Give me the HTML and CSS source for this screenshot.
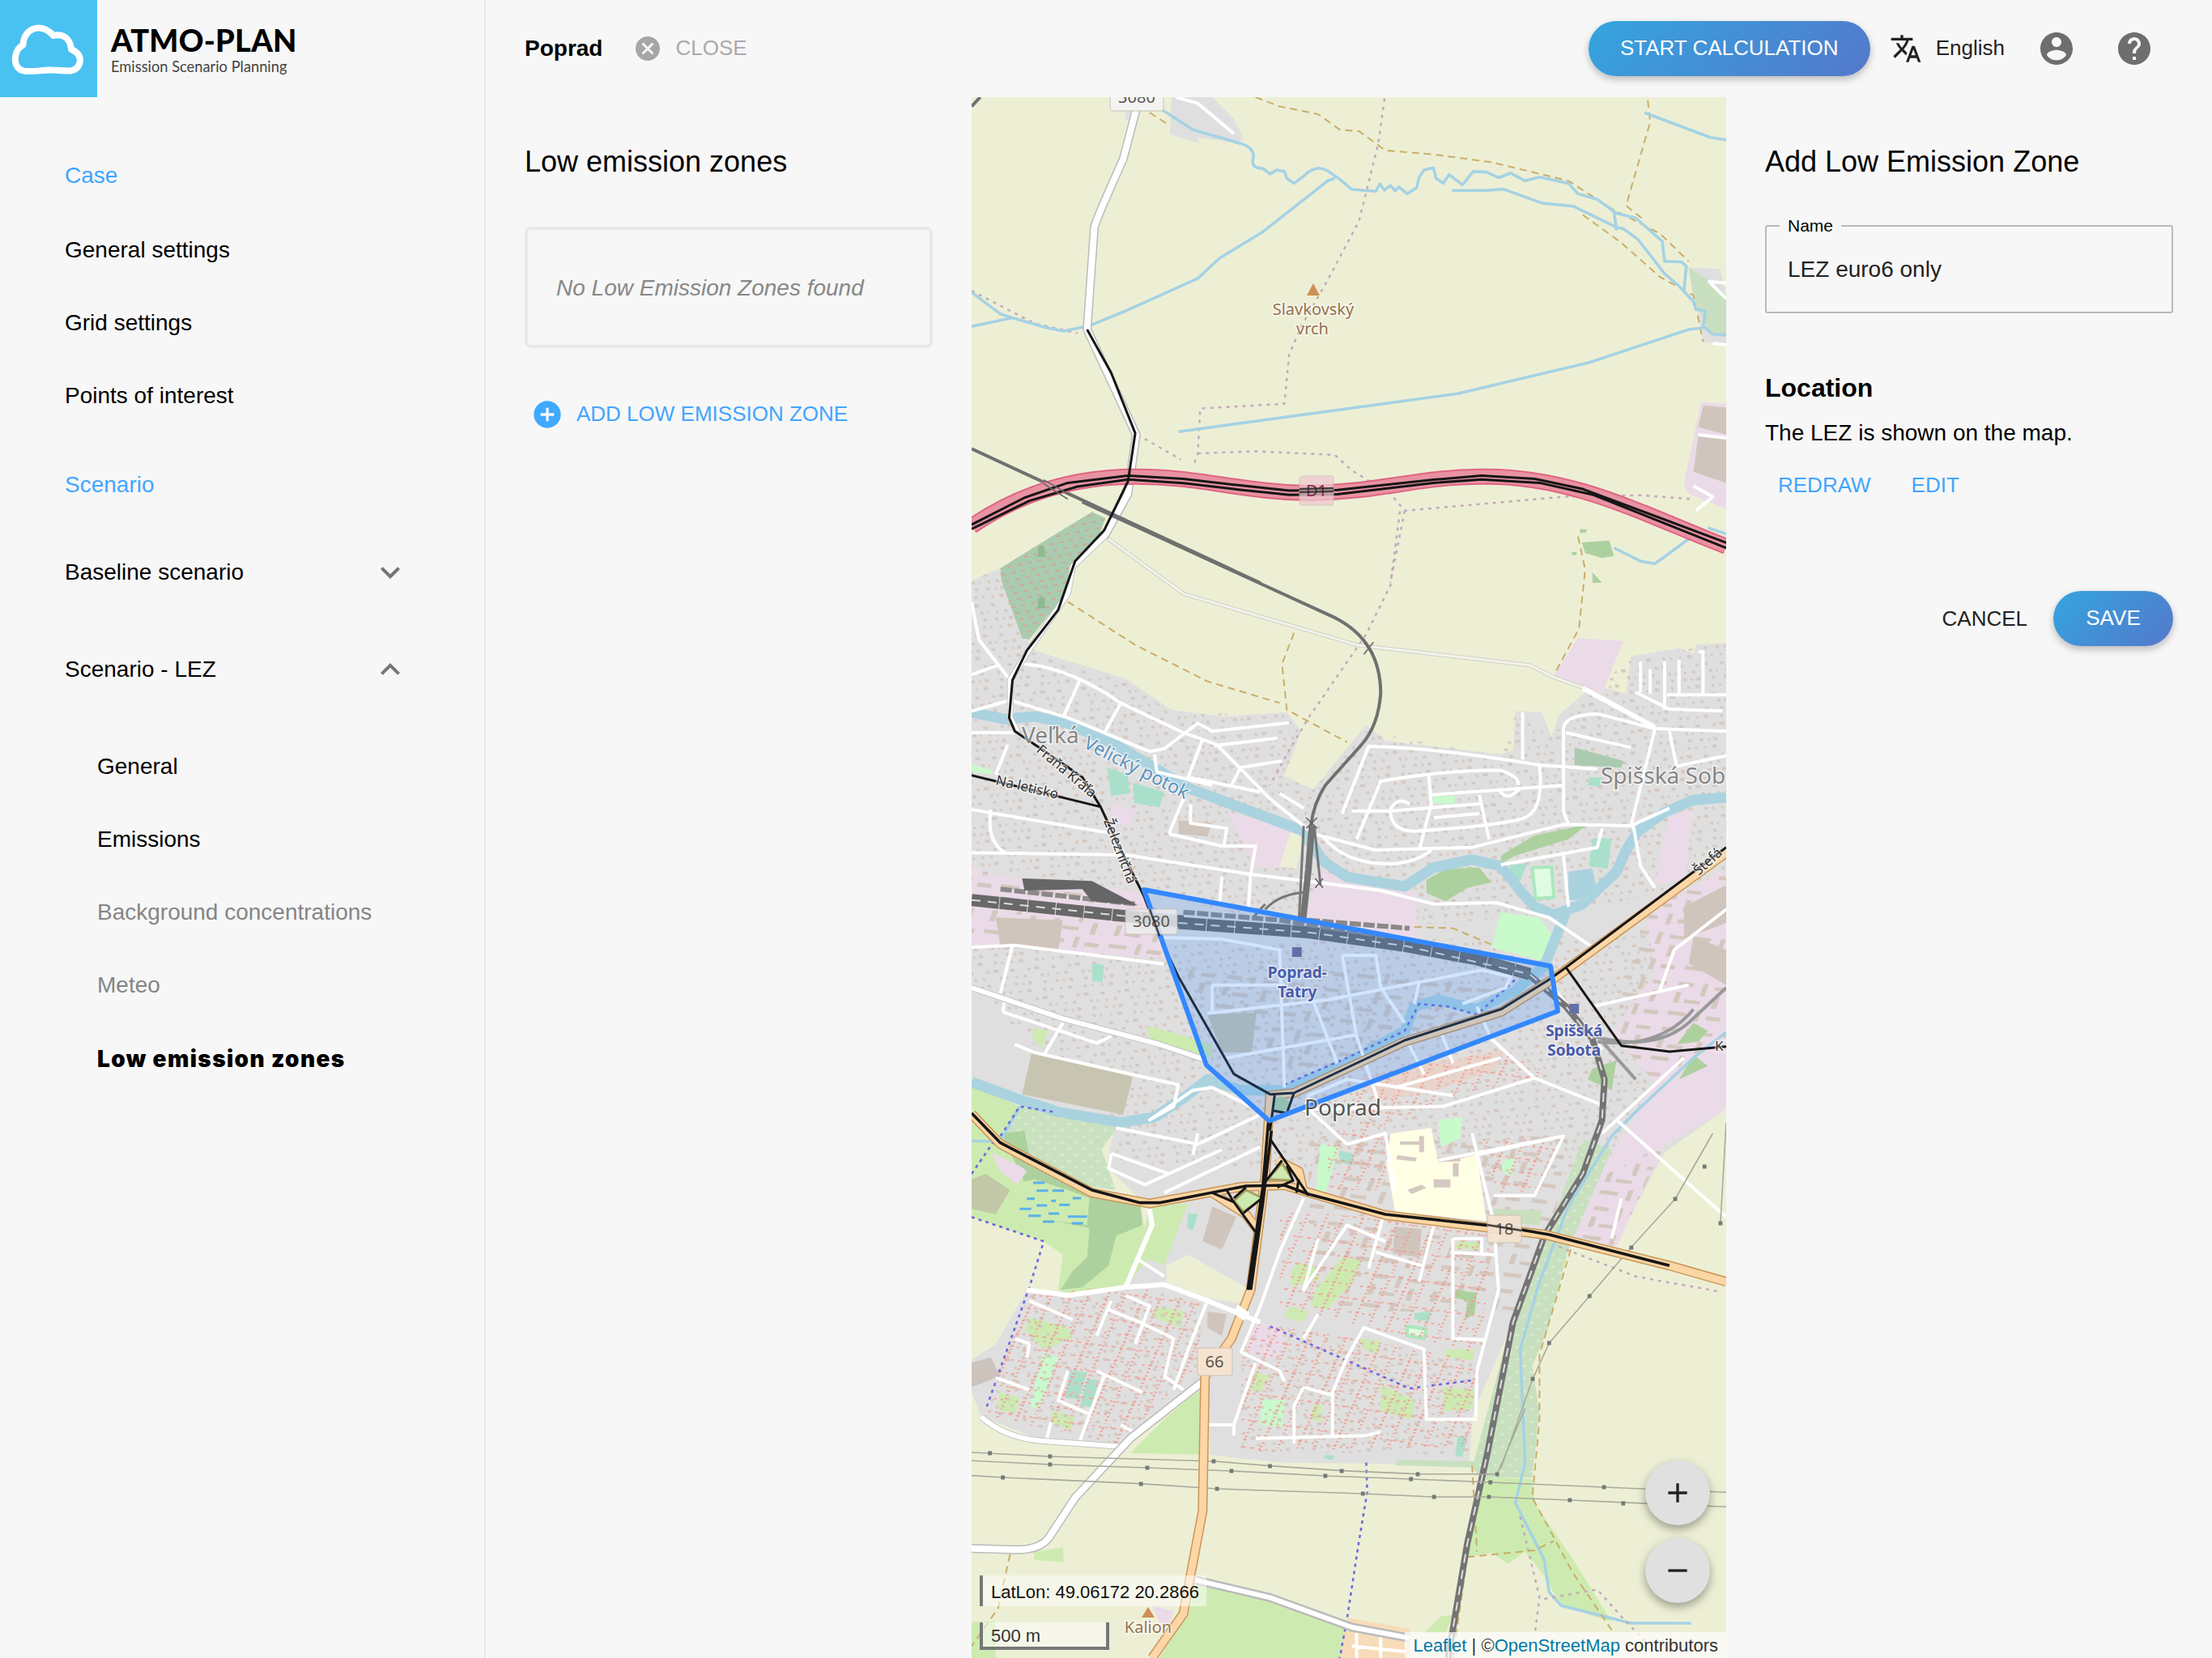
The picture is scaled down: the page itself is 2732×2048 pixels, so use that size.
FILE: index.html
```html
<!DOCTYPE html>
<html lang="en">
<head>
<meta charset="utf-8">
<title>ATMO-PLAN – Low emission zones</title>
<link rel="stylesheet" href="styles.css">
</head>
<body>
<div class="app">
  <aside class="sidebar">
    <div class="brand">
      <svg class="brand-mark" viewBox="0 0 120 120"><path d="M27 87C20 84 18 77 19 70c1-8 5-12 9.500-14.500C29 43 37 34.500 48 34.500c9 0 14 5 18 9.500 11-3 21 3 22 17 7 3 11 8 11 14-1 8-6 12.500-14 12.500-8 0-15-1-23-1-12 0-25 3.500-35 .5z" fill="none" stroke="#fff" stroke-width="8" stroke-linejoin="round"/></svg>
      <div class="brand-text"><div class="brand-name">ATMO-PLAN</div><div class="brand-sub">Emission Scenario Planning</div></div>
    </div>
    <nav class="nav">
      <div class="nav-title first">Case</div>
      <a class="nav-item">General settings</a>
      <a class="nav-item">Grid settings</a>
      <a class="nav-item">Points of interest</a>
      <div class="nav-title">Scenario</div>
      <a class="nav-group">Baseline scenario<svg class="chev" viewBox="0 0 24 24"><path d="M7.41 8.59 12 13.17l4.59-4.58L18 10l-6 6-6-6z"/></svg></a>
      <a class="nav-group">Scenario - LEZ<svg class="chev" viewBox="0 0 24 24"><path d="M7.41 15.41 12 10.83l4.59 4.58L18 14l-6-6-6 6z"/></svg></a>
      <div class="subnav">
        <a class="nav-item">General</a>
        <a class="nav-item">Emissions</a>
        <a class="nav-item disabled">Background concentrations</a>
        <a class="nav-item disabled">Meteo</a>
        <a class="nav-item active">Low emission zones</a>
      </div>
    </nav>
  </aside>
  <div class="main">
    <header class="topbar">
      <div class="case-name">Poprad</div>
      <a class="close"><svg class="ico-close" viewBox="0 0 24 24"><path d="M12 2C6.47 2 2 6.47 2 12s4.47 10 10 10 10-4.47 10-10S17.53 2 12 2zm5 13.59L15.59 17 12 13.41 8.41 17 7 15.59 10.59 12 7 8.41 8.41 7 12 10.59 15.59 7 17 8.41 13.41 12 17 15.59z"/></svg><span class="up">CLOSE</span></a>
      <button class="btn start">START CALCULATION</button>
      <svg class="ico-lang" viewBox="0 0 24 24"><path d="M12.87 15.07l-2.54-2.51.03-.03c1.74-1.94 2.98-4.17 3.71-6.53H17V4h-7V2H8v2H1v1.99h11.17C11.5 7.92 10.44 9.75 9 11.35 8.07 10.32 7.3 9.19 6.69 8h-2c.73 1.63 1.73 3.17 2.98 4.56l-5.09 5.02L4 19l5-5 3.11 3.11.76-2.04zM18.5 10h-2L12 22h2l1.12-3h4.75L21 22h2l-4.5-12zm-2.62 7l1.62-4.33L19.12 17h-3.24z"/></svg>
      <span class="lang">English</span>
      <svg class="ico-top user" viewBox="0 0 24 24"><path d="M12 2C6.48 2 2 6.48 2 12s4.48 10 10 10 10-4.48 10-10S17.52 2 12 2zm0 3c1.66 0 3 1.34 3 3s-1.34 3-3 3-3-1.34-3-3 1.34-3 3-3zm0 14.2c-2.5 0-4.71-1.28-6-3.22.03-1.99 4-3.08 6-3.08 1.99 0 5.97 1.09 6 3.08-1.29 1.94-3.5 3.22-6 3.22z"/></svg>
      <svg class="ico-top help" viewBox="0 0 24 24"><path d="M12 2C6.48 2 2 6.48 2 12s4.48 10 10 10 10-4.48 10-10S17.52 2 12 2zm1 17h-2v-2h2v2zm2.07-7.75l-.9.92C13.45 12.9 13 13.5 13 15h-2v-.5c0-1.1.45-2.1 1.17-2.83l1.24-1.26c.37-.36.59-.86.59-1.41 0-1.1-.9-2-2-2s-2 .9-2 2H8c0-2.21 1.79-4 4-4s4 1.79 4 4c0 .88-.36 1.68-.93 2.25z"/></svg>
    </header>
    <div class="content">
      <section class="zones">
        <h2 class="title">Low emission zones</h2>
        <div class="empty">No Low Emission Zones found</div>
        <a class="add"><svg class="ico-add" viewBox="0 0 24 24"><path d="M12 2C6.48 2 2 6.48 2 12s4.48 10 10 10 10-4.48 10-10S17.52 2 12 2zm5 11h-4v4h-2v-4H7v-2h4V7h2v4h4v2z"/></svg><span class="up">ADD LOW EMISSION ZONE</span></a>
      </section>
      <section class="map">
        <svg class="tiles" viewBox="0 0 932 1928">
          <defs>
            <pattern id="houses" width="86" height="112" patternUnits="userSpaceOnUse" patternTransform="rotate(-9)">
              <g fill="#d4c8c0"><path d="M4 8h7v10h-7zM20 10h5v9h-5zM33 7h8v12h-8zM65 8h7v10h-7zM9 38h5v9h-5zM26 35h9v12h-9zM60 36h6v11h-6zM75 38h5v9h-5zM3 68h9v10h-9zM39 68h6v10h-6zM54 66h10v11h-10zM10 95h5v9h-5zM27 93h7v10h-7zM63 93h6v11h-6zM77 95h4v9h-4z"/></g>
            </pattern>
            <pattern id="blocks" width="132" height="170" patternUnits="userSpaceOnUse" patternTransform="rotate(12)">
              <g fill="#d3c7be"><path d="M8 10h32v14h-32zM60 8h10v46h-10zM86 14h30v13h-30zM10 48h11v40h-11zM32 72h34v13h-34zM92 50h11v44h-11zM8 120h38v14h-38zM66 108h10v40h-10zM90 124h30v15h-30z"/></g>
            </pattern>
            <pattern id="paths" width="74" height="98" patternUnits="userSpaceOnUse" patternTransform="rotate(14)">
              <path d="M0 12H74M18 0V98M0 62H50M52 12V98" fill="none" stroke="#f49a8c" stroke-width="5" stroke-dasharray="5 9"/>
            </pattern>
            <pattern id="graves" width="22" height="24" patternUnits="userSpaceOnUse" patternTransform="rotate(-20)"><path d="M3 4h9v4h-9z" fill="#e09a86"/></pattern>
            <pattern id="trees" width="30" height="46" patternUnits="userSpaceOnUse"><circle cx="8" cy="10" r="4" fill="#dcebd2"/><circle cx="23" cy="33" r="4" fill="#dcebd2"/></pattern>
          </defs>
          <rect width="932" height="1928" fill="#edefd5"/>

          <!-- land use -->
          <g class="all">
            <path fill="#e0dfdf" d="M0 1790 60 1745 115 2010 130 2050 320 2155 415 2270 520 2295 655 2280 685 2350 650 2515 710 2565 820 2325 860 2385 1100 2435 1125 2420 1130 2275 1185 2280 1205 2370 1220 2290 1275 2205 1320 2190 1360 2210 1370 2072 1470 2042 1500 2060 1505 2030 1568 2022V3750L1440 3910 1335 4260 1190 4260 1040 4890 1035 5055 880 5065 650 5060 560 5045 495 5030 490 4760 420 4850 305 5000 150 4980 20 4890 0 4800V4680L50 4620 115 4420 200 4440 320 4400 370 4120 280 3960 300 3790 0 3660z"/>
            <path fill="url(#houses)" d="M0 1790 60 1745 130 2060 320 2170 415 2280 655 2290 685 2350 650 2515 710 2565 820 2350 1100 2445 1130 2290 1205 2370 1275 2220 1370 2080 1568 2022V2880L1260 3020 700 3100 380 2950 0 2850zM0 3150 1568 3100V3750L1250 4000 300 3950 300 3790 0 3300z"/>
            <path fill="#ebdbe8" d="M1260 2005 1355 2015 1310 2210 1210 2140zM530 2650 665 2700 640 2855 590 2850zM0 2850 60 2890 340 2940 400 3030 400 3190 0 3140zM720 2870 925 2950V3130L690 3070zM1450 2660 1500 2640 1480 2900 1420 2920zM1400 3020 1568 2860V3750L1440 3880 1340 4260 1235 4210 1300 4010 1420 3650 1330 3470 1420 3250zM590 4540 650 4560 640 4680 570 4650zM290 2620 340 2640 330 2700 300 2690z"/>
            <path fill="#edefd5" d="M665 2710 690 2740 675 2860 640 2850zM405 4330 450 4290 570 4410 560 4470 490 4450 405 4390z"/>
            <path fill="url(#blocks)" d="M0 2860 400 3010 410 3200 0 3150zM1400 3020 1568 2860V3500L1420 3650 1330 3470zM1300 4010 1440 3880 1340 4260 1235 4210zM700 3850 1240 3850 1180 4500 700 4500zM420 3200 900 3250 1150 3300 700 3650 600 3600z"/>
            <path fill="#d0c5bc" d="M1480 3000 1568 2920V3060L1480 3120zM1500 3110 1568 3160V3290L1490 3210zM50 3040 190 3050 180 3160 60 3150zM430 2680 500 2690 490 2740 430 2730zM880 4185 935 4195 930 4300 875 4285zM500 4110 550 4150 520 4270 480 4240zM490 4500 530 4510 520 4590 490 4560z"/>
            <path fill="#c7c5b1" d="M125 3540 335 3630 315 3770 105 3695zM490 3400 592 3392 582 3540 520 3540z"/>
            <path fill="#c9e1bf" d="M100 3740 310 3800 270 3900 300 4050 180 4020 60 3890z"/>
            <path fill="url(#trees)" d="M100 3740 310 3800 270 3900 300 4050 180 4020 60 3890z"/>
            <path fill="#cdebb0" d="M0 3660 100 3740 60 3880 120 3960 350 4100 370 4300 320 4410 200 4440 180 4420 190 4290 150 4240 0 4150zM370 4110 450 4100 400 4330 350 4290zM480 4780V5030L330 5025 400 4900zM0 5650H50V5784H0zM470 5500 620 5560 780 5660 770 5784H390L450 5620zM130 5390 190 5375 192 5430 130 5420zM1060 5115 1165 5120 1170 5210 1250 5420 1330 5650 1225 5590 1190 5480 1150 5390 1115 5435 1080 5395 1030 5410zM975 5630 1000 5625 985 5690 940 5690z"/>
            <path fill="#add19e" d="M60 3840 110 3830 120 3920 250 4050 350 4090 355 4180 300 4220 285 4330 230 4410 185 4420 210 4350 240 4300 245 4190 130 4150 105 4000zM1268 1650 1325 1643 1335 1700 1310 1708 1275 1690zM1290 1760 1310 1800 1290 1800zM985 2860 1055 2855 1080 2910 1030 2930 985 2980 945 2950 945 2900zM1100 2810 1170 2735 1280 2695 1240 2750 1130 2810 1100 2840zM1500 3430 1530 3460 1510 3500 1465 3510zM1500 3550 1530 3590 1470 3640zM1290 3600 1340 3570 1330 3680 1280 3640zM1265 1600l15 3-5 12h-12zM1247 1685h10v12h-10z"/>
            <path fill="#cdebb0" d="M105 4020 130 4010 200 4050 245 4080 240 4180 130 4155z"/>
            <path fill="#c8e0bf" d="M1270 3860 1330 3900 1240 4270 1195 4580 1165 4700 1180 4870 1165 5115 1060 5118 1040 5080 1075 4850 1130 4480 1195 4220zM885 5050 1055 5055V5078L880 5070zM1085 4120 1185 4125 1180 4180 1085 4165z"/>
            <path fill="url(#trees)" d="M1270 3860 1330 3900 1240 4270 1195 4580 1165 4700 1180 4870 1165 5115 1060 5118 1040 5080 1075 4850 1130 4480 1195 4220z"/>
            <path fill="#aacbb0" d="M60 1745 250 1537 278 1560 265 1625 215 1722 200 1830 120 2010 105 2005 62 1790zM1253 2410 1355 2460 1350 2485 1253 2475z"/>
            <path fill="url(#graves)" d="M60 1745 250 1537 278 1560 265 1625 215 1722 200 1830 120 2010 105 2005 62 1790z"/>
            <path fill="#8fb98f" d="M138 1700v-30q7-18 14 0v30h4v4h-22v-4zM138 1890v-30q7-18 14 0v30h4v4h-22v-4z"/>
            <path fill="#aae0cb" d="M282 2485 325 2510 328 2580 290 2590zM335 2540 400 2575 390 2632 338 2615zM1292 2745 1330 2748 1322 2860 1282 2850zM1120 2845 1155 2840 1140 2900 1118 2880zM250 3210 275 3215 272 3280 250 3275zM205 4720 240 4725 222 4825 195 4820zM240 4750 264 4755 250 4855 225 4850zM765 3905 795 3915 790 3960 765 3945zM1010 4960 1030 4965 1020 5040 1005 5035zM735 5030 755 5035 750 5050 732 5045zM450 4135 470 4140 460 4200 448 4190zM920 4505 955 4500 950 4535 920 4530zM1285 2520 1310 2520 1305 2555 1280 2550z"/>
            <path fill="#dffce2" stroke="#aae8bd" stroke-width="4" d="M1165 2855 1205 2852 1210 2965 1172 2970zM905 4555 945 4565 940 4600 905 4590z"/>
            <path fill="#c8facc" d="M725 3880 765 3890 735 4060 715 4050zM970 3790 1020 3780 1015 3860 975 3890zM1100 3020 1180 3040 1215 3130 1185 3200 1080 3150zM602 4825 652 4830 645 4930 600 4920zM150 4650 180 4670 140 4860 120 4850zM1105 3940 1130 3930 1120 4000 1100 3980zM0 2475 45 2495 40 2510 0 2500zM960 2590 1005 2590 1003 2620 958 2615z"/>
            <path fill="#cdebb0" d="M130 3450 160 3460 145 3525 125 3480z"/>
            <path fill="#ffffe5" d="M870 3840 955 3820 970 3950 1050 3920 1070 4165 880 4130 862 3950z"/>
            <path fill="#d4c8c0" d="M960 4010h35v30h-35zM985 3930h30v14h-30zM1000 3950h12v50h-12zM890 3870h45v12h-45zM905 4050l30-20 10 12-30 22zM930 3850h10v60h-10zM885 3920l40 10-3 14-40-8z"/>
            <path fill="#cdebb0" d="M120 4520 200 4560 210 4600 150 4640 110 4570zM385 4480 440 4500 435 4560 375 4520zM60 4800 100 4820 90 4880 52 4860zM165 4865 215 4890 205 4940 165 4910zM770 4300 810 4310 790 4400 760 4450 740 4490 705 4480 715 4420zM680 4320 710 4330 725 4380 665 4410 665 4350zM660 4480 700 4500 690 4540 650 4520zM1010 4240 1055 4245V4270L1005 4265zM985 4640 1045 4640 1040 4680 985 4670zM980 4780 1045 4790 1040 4860 980 4870zM850 4770 920 4830 915 4900 850 4870zM590 4720 620 4740 600 4800 580 4790zM710 4840 730 4850 725 4910 705 4900zM365 3440 500 3510 500 3560 370 3490zM805 4600 850 4610 845 4660 815 4640z"/>
            <path fill="#add19e" d="M1005 4420 1050 4430 1045 4510 1025 4530 1030 4460 1005 4450z"/>
            <path fill="url(#houses)" d="M120 4440 320 4400 480 4470 470 4700 305 4990 30 4890 80 4600zM600 4540 1050 4680 1040 4900 1035 5030 560 5020 560 4650z"/>
            <path fill="url(#paths)" d="M120 4440 320 4400 480 4470 470 4700 305 4990 30 4890 80 4600zM600 4540 1050 4680 1040 4900 1035 5000 560 5020 560 4650zM640 4120 1080 4200 1060 4660 640 4480zM740 3840 860 3840 860 4050 740 4050zM1060 3860 1230 3850 1180 4060 1090 4060z"/>
            <path fill="#f2c9b9" d="M800 3640 950 3580 1110 3530 1090 3600 950 3690 850 3720z" opacity=".5"/>
            <path fill="url(#paths)" d="M780 3640 950 3580 1110 3530 1200 3620 1000 3700 790 3860z"/>
            <path fill="#f7dcb9" d="M782 5635 910 5675V5784H765z"/>
            <path fill="#ebdbe8" d="M375 5590 420 5610 410 5660 390 5650z"/>
            <path fill="#b9ab9e" opacity=".55" d="M0 4010 30 3990 80 4050 50 4140 0 4120zM0 4690 40 4670 60 4740 0 4780z"/>
            <path fill="#ebdbe8" d="M40 3910 100 3960 115 3980 95 4030 60 3980z"/>
            <path fill="none" stroke="#5cb0ea" class="w3" d="M128 4023h24M135 4052h24M168 4052h24M115 4082h16M165 4090h10M210 4080h18M100 4120h24M135 4107h22M182 4105h22M118 4145h26M160 4137h22M200 4148h40M148 4167h24M208 4173h24"/>
            <path fill="#aad3df" d="M1240 2870 1290 2858 1298 2930 1260 2975 1240 2975z"/>
          </g>
          <g class="north">
            <path fill="#e0dfdf" d="M320 45 335 45 330 80 318 70zM415 0H500L545 70 565 130 555 150 470 130 472 148 412 120zM1490 550 1555 555 1568 640V800L1520 790z"/>
            <path fill="#c8e0bf" d="M1490 550 1530 590 1568 640V765L1535 765 1500 650z"/>
            <path fill="#ebdbe8" d="M1515 985 1568 990V1330L1490 1280 1480 1250z"/>
            <path fill="#d0c5bc" d="M1520 995 1568 1002V1090L1510 1065zM1510 1090 1568 1105V1245L1500 1210z"/>
            <path class="foot" d="M590 0 640 30 720 55 765 105 805 110 860 172 960 185 1080 210 1240 270 1330 360 1430 440 1490 530M1405 10 1410 80 1360 350 1400 400M1270 380 1350 470 1430 580 1500 640 1520 790M370 50 410 90"/>
            <path class="bound" d="M858 5 845 150 805 400 740 590 685 740 660 830 650 990 475 1005 470 1150 460 1195M470 1150 590 1143 755 1155 790 1205 870 1280 900 1335 1230 1290 1390 1285 1500 1298M900 1335 870 1568M345 1090 435 1170M0 625 130 730 220 762"/>
            <g class="stream"><path d="M395 40 460 105 560 150Q590 165 585 200 580 230 605 230L620 248 635 235 650 240 655 262 670 278 690 255Q715 215 740 238L765 265 790 298 840 304 848 280 858 300 870 285 880 302 888 290 905 312 925 292 930 258 940 235 960 228 965 262 980 278 992 250 1020 283 1042 240 1070 242 1095 260 1120 245 1150 270 1180 258 1240 278 1260 312 1300 330 1340 375 1380 390 1435 465 1440 530 1475 532 1485 545 1480 630"/><path d="M998 301H1070L1105 297 1185 342 1250 352 1340 420 1355 425 1385 460 1410 510 1440 570 1470 610 1500 660 1505 685 1525 690 1520 740 1540 765 1568 768M1335 370 1340 430M755 262 740 270 605 435 515 520 470 585 320 690 245 738 190 755 150 742 85 712 0 740M85 712 60 700 0 630M430 1080 1010 957 1285 856 1490 750 1520 745M1398 50 1535 130 1568 138M1335 1455 1390 1498 1420 1506 1500 1415M1530 1390 1568 1410"/></g>
            <path class="rd" d="M425 0 470 20 545 118M1530 595 1568 600M1535 600 1568 650M1540 795 1568 800M1500 1255 1540 1290 1505 1335M1510 1090 1568 1100"/>
          </g>

          <!-- water -->
          <g class="all">
            <path class="river" d="M0 2280 70 2305 130 2295 200 2320 300 2400 450 2560 690 2720 730 2830 780 2890 900 2925 960 2855 1040 2825 1100 2850 1140 2940 1170 3000 1210 3030 1270 2990 1340 2870 1360 2790 1385 2720 1440 2650 1500 2605 1568 2595M1235 3020 1190 3220 1130 3310 1050 3380 970 3345 920 3370 900 3460 780 3580 650 3680 560 3680 490 3640 440 3710 380 3780 310 3800 180 3760 100 3715 0 3650"/>
            <path class="stream" d="M1568 3465 1500 3560 1380 3760 1330 3850 1240 4110 1180 4390 1140 4640 1150 5060 1130 5210 1190 5420 1200 5540 1225 5590 1370 5655 1495 5655M0 3868 60 3870 100 3740"/>
            <path class="bound" d="M890 1535 870 1810 820 1990 700 2300 660 2420 620 2550M1220 4260 1380 4370 1550 4425M1140 5260 1180 5560 1170 5700M1190 5565 1300 5530 1360 5650 1400 5720"/>
            <path class="foot" d="M1260 1628 1275 1750 1262 1970 1210 2140M200 1870 340 2030 490 2165 640 2245M670 1985 645 2100 655 2270 780 2390M1245 4270 1180 4660 1180 4900 1165 5190 1250 5470 1330 5680M1040 5070 1050 5390M80 5400 55 5600 0 5740M1030 5410 1170 5385 1210 5350M920 3075 1000 3080 1080 3140M1030 5410 1000 5784"/>
            <path class="purple" d="M0 4150 150 4240 120 4410 30 4860M620 4555 790 4690 910 4785 1040 4755M820 5060 822 5170 805 5350 780 5640 765 5784M60 3850 100 3740 170 3760M650 3660 780 3560 900 3460 930 3360 990 3370 1050 3400 1130 3270M0 3990 50 3860"/>
          </g>

          <!-- streets -->
          <g class="all">
            <g class="rd">
              <path d="M0 1870 15 2010 80 2160M0 2140 55 2105M105 2100Q200 2110 310 2245L440 2355 510 2400 620 2600 710 2730M80 2235 200 2300 370 2425 400 2415 470 2320 500 2350 660 2318M225 2160 190 2300M310 2245 275 2360M505 2403 635 2375M555 2485 645 2460M440 2355 480 2380 450 2520 600 2575M380 2435 385 2500 500 2550M540 2550 560 2480M640 2580 690 2635M0 2355 90 2355M75 2400 50 2510M0 2275 80 2235"/>
              <path d="M770 2655 825 2405Q960 2410 1180 2475L1300 2490M800 2750 850 2535Q1000 2490 1100 2495 1140 2520 1135 2550M870 2640Q870 2720 920 2720 1100 2700 1150 2670 1190 2640 1180 2475M790 2645 870 2645 1060 2618M955 2585 1230 2550M960 2670 1055 2655M1055 2585 1075 2750M950 2510 955 2620 930 2790M870 2640Q885 2590 910 2620M1095 2560Q1110 2620 1140 2560M710 2730 840 2790 1040 2780 1230 2695 1370 2700 1420 2340 1568 2350M1230 2350Q1225 2290 1300 2285L1420 2340M1230 2350V2650L1240 2690M1235 2355 1370 2410M1375 2700 1390 2850 1420 2930M1380 2205 1450 2268 1560 2275M1440 2270V2090M1470 2210V2085M1520 2210V2055H1510M1445 2215H1568M1390 2205V2090M1410 2210V2120M1145 2280V2455M1450 2350 1465 2480 1568 2440M1370 2700 1450 2635"/>
              <path d="M0 2640 280 2725M0 2800 320 2808 580 2880 720 2910 850 2940 960 2990 1090 2985 1200 3040 1290 3150M410 2730 440 2600M410 2730 520 2775 590 2775 580 2880M40 2640Q30 2760 70 2800M455 2620V2690L530 2710 525 2770M730 2740Q780 2850 880 2840 930 2830 955 2790M1100 2845 1300 2780 1310 2710M1240 3000 1230 2810M520 2890 515 3000M580 2870 575 3010"/>
              <path d="M0 3150 90 3143 400 3212M85 3143 60 3320M65 3390 260 3505 290 3480M70 3330 65 3390M150 3550 190 3430M90 3510 130 3540 430 3660 420 3740 370 3790 460 3680 500 3670 580 3740M290 3915 410 3990M300 3820 470 3880 600 3770M290 3915 285 3970 360 4030 520 3900M400 4060 600 3890M470 3840 460 3920"/>
              <path d="M400 3115 520 3120 640 3160 650 3670M490 3395 740 3345 1060 3235 1120 3260 1110 3300 1020 3360M500 3290H650M500 3290V3390M770 3180 800 3480 850 3750M770 3180H840L850 3300 900 3430M530 3560 800 3475M930 3280 920 3360M710 3350 760 3580M1050 3370 1080 3490 1170 3635 1310 3735M1200 3280 1310 3530M1170 3635 980 3740 700 3750 780 3880 860 3840 880 4060M1290 3370 1490 3290M1430 3310 1460 3160 1568 3010M1040 3840 1085 4170 1095 4420 1050 4720 1048 4890M690 3760 700 3700 780 3640 1000 3700M880 3670 1100 3560M970 3440 1000 3580M900 3480 940 3620M970 3940 1230 3850 1170 4070 1085 4070M1050 3920 1230 3850"/>
              <path d="M690 4080 640 4280 600 4480 560 4650 640 4720 650 4760M590 4690 545 4920H490M960 4180 930 4390M855 4150 825 4340M840 4280 935 4330M995 4280 1090 4290M1000 4230H1060V4290M1000 4230 1000 4600 1065 4605M780 4670 815 4560 940 4640 945 4900H1050M750 4960V4800L780 4670M690 4780 670 4850V4990M750 4810 690 4780M590 4970 820 4960 850 4945M545 4920V4960M490 4460 450 4640 420 4790M320 4440 370 4480 340 4620M280 4490 350 4540 420 4600 400 4750M290 4460 260 4590M120 4460 210 4530M90 4600 120 4620 115 4670M50 4745 120 4790M260 4720 355 4800M275 4740 225 4980M200 4720 180 4830 245 4880M165 4910 155 4980M400 4740 440 4790M310 4920 350 4960M690 4600 720 4510M720 4230 690 4420 780 4180 860 4240M340 4300 400 4370"/>
              <path d="M790 5660 900 5700M800 5690V5784M850 5700V5784M790 5740 900 5760M1340 3790 1568 4150M1310 3840 1480 3560M1330 4230 1350 4080"/>
            </g>
            <path class="lane" d="M275 1625 440 1840 800 2030 1160 2105 1210 2150 1290 2200"/>
            <path class="lane2" d="M275 1625 440 1840 800 2030 1160 2105 1210 2150 1290 2200"/>
            <path class="wht5" d="M1270 2190 1420 2335M370 4120 375 4180 320 4410"/>
            <path class="cas5" d="M0 3300 190 3415 390 3510 490 3570M20 4890Q70 4970 150 4980L310 5000"/>
            <path class="wht5" d="M0 3300 190 3415 390 3510 490 3570M20 4890Q70 4970 150 4980L310 5000"/>
            <path class="cas" d="M480 4760 330 4970 215 5190 160 5340Q140 5385 90 5383L0 5378M465 5495 620 5560 790 5670 910 5710"/>
            <path class="wht" d="M480 4760 330 4970 215 5190 160 5340Q140 5385 90 5383L0 5378"/>
            <path class="wht5" d="M465 5495 620 5560 790 5670 910 5710M115 4420 200 4440 320 4410 400 4400 490 4460 600 4540"/>
          </g>
          <g class="north">
            <path class="cas" d="M342 40 315 200Q260 390 255 420L240 750 300 950 342 1090 325 1280 275 1420"/>
            <path class="wht" d="M342 40 315 200Q260 390 255 420L240 750 300 950 342 1090 325 1280 275 1420"/>
          </g>
          <g class="all"><path class="cas5" d="M280 1620 210 1740 200 1840 115 2060 80 2160 80 2300 95 2350"/><path class="wht5" d="M280 1620 210 1740 200 1840 115 2060 80 2160 80 2300 95 2350"/></g>

          <!-- railways -->
          <g class="all">
            <path class="rail" d="M230 1500 750 1925Q850 2010 850 2210 845 2330 810 2400L735 2550Q710 2620 705 2700"/>
            <path class="rail6" d="M707 2700 700 2860 688 3060"/>
            <path class="rail2" d="M712 2700 725 2920M610 3010Q640 2950 700 2945M585 3040 610 2990M690 2700 680 3060"/>
            <path class="yard" d="M0 2975 320 3035 440 3055"/>
            <path class="yard2" d="M60 2935 340 2990"/>
            <path fill="#666" d="M105 2895 250 2905 330 2980 345 2995 250 2980 230 2935 110 2940z"/>
            <path class="yard" d="M430 3060 700 3095 900 3145 1050 3195 1160 3250"/>
            <path class="yard2" d="M440 3020 640 3050 860 3110M700 3050 910 3080"/>
            <path class="rail6" d="M1080 3200 1160 3255 1235 3370 1290 3490 1315 3640 1310 3790 1270 3990 1190 4220 1125 4540 1070 5040 1030 5360 990 5784"/>
            <path class="raild" d="M0 2975 320 3035M430 3060 700 3095 900 3145 1160 3250 1235 3370 1290 3490 1315 3640 1310 3790 1270 3990 1190 4220 1125 4540 1070 5040 1030 5360 990 5784"/>
            <path class="railg" d="M1290 3480Q1420 3540 1490 3430L1568 3300M1300 3500Q1430 3530 1500 3380M1310 3500 1380 3640"/>
            <path class="power" d="M0 5022 160 5037 505 5055 620 5072 770 5090 925 5102 1092 5103 1150 4860M0 5053 165 5067 365 5079 540 5091 735 5109 913 5121 1078 5133 1314 5151 1568 5170M0 5108 65 5115 350 5138 510 5157 812 5175 960 5187 1075 5187 1243 5199 1568 5224M1540 3840 1462 4083 1370 4263 1284 4443 1200 4617 1166 4750 1100 5080M1568 3800 1556 4173"/>
            <path class="poles" d="M34 5025h8M159 5037h8M159 5067h8M361 5079h8M499 5055h8M536 5091h8M616 5073h8M731 5109h8M765 5091h8M923 5103h8M909 5121h8M1088 5103h8M1074 5133h8M1310 5151h8M61 5115h8M348 5139h8M506 5157h8M809 5175h8M957 5187h8M1071 5187h8M1239 5199h8M1350 5211h8M1519 3963h8M1458 4083h8M1367 4263h8M1280 4443h8M1196 4617h8M1162 4750h8M1552 4173h8"/>
            <path class="cross" d="M815 2020 835 2065M835 2020 815 2065M695 2670 718 2710M718 2670 695 2710M714 2895 730 2930M730 2895 714 2930"/>
          </g>
          <g class="north">
            <path class="rail" d="M0 1135 600 1568M0 30 18 0"/>
            <path class="d1c" d="M0 1385Q150 1225 340 1225C480 1225 560 1275 700 1278C850 1275 930 1225 1060 1225C1250 1220 1400 1350 1568 1450"/>
            <path class="d1" d="M0 1385Q150 1225 340 1225C480 1225 560 1275 700 1278C850 1275 930 1225 1060 1225C1250 1220 1400 1350 1568 1450"/>
            <path class="blk" d="M0 1380 110 1293 200 1245 325 1222 440 1232 550 1252 660 1270 760 1268 960 1235 1060 1222 1170 1232 1270 1265 1568 1438M0 1394 120 1303 220 1257 325 1234 440 1246 550 1266 660 1284 760 1282 960 1245 1060 1234 1180 1245 1290 1283 1568 1455"/>
            <path class="blk" d="M240 750 290 890 340 1085 325 1240 275 1400"/>
            <path class="cross" d="M150 1235 205 1285M150 1248 200 1298"/>
          </g>

          <!-- main roads -->
          <g class="all">
            <path class="orc" d="M0 3768 60 3880 250 4060 370 4100 560 4038 650 4032 860 4143 1190 4215 1450 4330 1568 4390M1568 2800 1215 3260 1100 3390 900 3500 670 3690 620 3700 610 4000 580 4420 540 4600 485 4740 480 5240 440 5620 375 5784M635 3940 680 3980 690 4060M500 4060 570 4140 595 4200"/>
            <path class="or" d="M0 3768 60 3880 250 4060 370 4100 560 4038 650 4032 860 4143 1190 4215 1450 4330 1568 4390M1568 2800 1215 3260 1100 3390 900 3500 670 3690 620 3700 610 4000 580 4420 540 4600 485 4740 480 5240 440 5620 375 5784M635 3940 680 3980 690 4060M500 4060 570 4140 595 4200"/>
            <path fill="#cdebb0" stroke="#a8a060" stroke-width="3" d="M645 3950 668 4015 615 4010zM605 4080 565 4130 545 4090 570 4050z"/>
            <ellipse cx="642" cy="3732" rx="18" ry="28" fill="#add19e"/>
            <path class="bridge" d="M548 4490 572 4520"/>
            <path class="blk" d="M275 1606 215 1720 180 1900 115 2050 85 2160 78 2300 90 2350 140 2410 230 2520 268 2630 310 2790 358 2960 390 3110 430 3260 545 3620 620 3695 670 3690 900 3495 1100 3380 1200 3270 1235 3225 1568 2780M0 2513 268 2630M1235 3225 1350 3515 1450 3537 1568 3518M630 3695 620 3830M670 3690 655 3765 625 3755"/>
            <path class="blk4" d="M0 3765 60 3875 250 4050 350 4097 390 4097 570 4035 650 4032 700 4065 860 4140 1120 4190 1200 4215 1450 4330M617 3790 605 4040 574 4420M623 3830 605 4100 580 4420"/>
            <path class="blk" d="M620 3860 700 4070M645 3940 610 4020M655 3960 668 4015 635 4040M500 4060 545 4095 590 4205M530 4050 545 4095M570 4040 545 4080M600 4085 565 4135M680 4010 675 4060"/>
            <path class="zone" d="M358 2937 1203 3220 1218 3387 618 3793 488 3587z"/>
            <path fill="#626fa8" d="M666 3150h20v36h-20zM1242 3360h20v36h-20z"/>
          </g>

          <!-- labels -->
          <g class="shield"><rect x="171" y="-18" width="66" height="35" rx="3" fill="#f3f3f1"/><rect x="190" y="1003" width="64" height="31" rx="3" fill="#eee" opacity=".8"/><rect x="279" y="1545" width="43" height="34" rx="3" fill="#f5e3cf"/><rect x="637" y="1381" width="42" height="34" rx="3" fill="#f5e3cf" opacity=".9"/><rect x="405" y="468" width="42" height="36" rx="3" fill="#efc8d0" stroke="#dc9aaa" opacity=".75"/></g>
          <g class="lbl ref"><text x="204" y="7">3080</text><text x="222" y="1025">3080</text><text x="300" y="1569">66</text><text x="658" y="1405">18</text><text x="426" y="493" fill="#7c2740">D1</text></g>
          <path class="ov" d="M220 1003 232 1036M637 1393 679 1400M405 484 447 483M405 488 447 487"/>
          <g fill="#d08f55"><path d="M422 230l8 15h-16zM218 1865l8 13h-16z"/></g>
          <g class="lbl peak"><text x="422" y="269">Slavkovský</text><text x="421" y="293">vrch</text><text x="218" y="1897">Kalion</text></g>
          <g class="lbl stn"><text x="402" y="1088">Poprad-</text><text x="402" y="1112">Tatry</text><text x="744" y="1160">Spišská</text><text x="744" y="1184">Sobota</text></g>
          <g class="lbl place"><text x="62" y="798">Veľká</text><text x="777" y="848">Spišská Sob</text><text x="411" y="1258" fill="#555">Poprad</text></g>
          <text class="lbl water" transform="translate(137 803) rotate(27)">Velický potok</text>
          <g class="lbl street"><text transform="translate(29 849) rotate(13)">Na letisko</text><text transform="translate(79 808) rotate(40)">Fraňa Kráľa</text><text transform="translate(163 894) rotate(69)">Železničná</text><text transform="translate(898 962) rotate(-42)">Štefá</text><text x="918" y="1178">K</text></g>
        </svg>
        <div class="latlon">LatLon: 49.06172 20.2866</div>
        <div class="scale">500 m</div>
        <div class="zoom"><button class="fab"><svg viewBox="0 0 24 24"><path d="M19 13h-6v6h-2v-6H5v-2h6V5h2v6h6v2z"/></svg></button><button class="fab"><svg viewBox="0 0 24 24"><path d="M19 13H5v-2h14v2z"/></svg></button></div>
        <div class="attrib"><a>Leaflet</a> | ©<a>OpenStreetMap</a> contributors</div>
      </section>
      <section class="form">
        <h2 class="title">Add Low Emission Zone</h2>
        <fieldset class="field"><legend>Name</legend>LEZ euro6 only</fieldset>
        <h3 class="subtitle">Location</h3>
        <p class="hint">The LEZ is shown on the map.</p>
        <div class="links"><a>REDRAW</a><a>EDIT</a></div>
        <div class="actions"><a class="cancel">CANCEL</a><button class="btn save">SAVE</button></div>
      </section>
    </div>
  </div>
</div>
</body>
</html>
```
FILE: styles.css
```css
* { box-sizing: border-box; }
body { margin: 0; background: #f7f7f7; color: #000; font: 28px/32px "Liberation Sans", Arial, sans-serif; }
button { font: inherit; border: 0; padding: 0; margin: 0; }
.app { display: flex; width: 2732px; height: 2048px; overflow: hidden; }

/* sidebar */
.sidebar { width: 600px; flex: none; border-right: 2px solid #e8e8e8; }
.brand { display: flex; height: 120px; }
.brand-mark { width: 120px; height: 120px; background: #49c1f1; }
.brand-text { padding: 29px 0 0 17px; font-family: Lato, sans-serif; white-space: nowrap; }
.brand-name { font-size: 38px; line-height: 40px; font-weight: 900; letter-spacing: .2px; }
.brand-sub { font-size: 18.3px; line-height: 27px; color: #444; }
.nav { padding: 52px 102px 0 80px; }
.nav-title { height: 90px; margin: 20px 0 3px; display: flex; align-items: center; color: #42a5ff; }
.nav-title.first { margin: 0 0 2px; }
.nav-item { display: flex; align-items: center; height: 90px; white-space: nowrap; }
.nav-group { display: flex; align-items: center; justify-content: space-between; height: 120px; }
.chev { width: 48px; height: 48px; margin-right: -10px; fill: #757575; }
.subnav { padding: 15px 0 0 40px; }
.disabled { color: #858585; }
.active { font: 900 28px/32px Inter, sans-serif; letter-spacing: 1.35px; padding-top: 2px; }

/* top bar */
.main { flex: 1; min-width: 0; display: flex; flex-direction: column; }
.topbar { height: 120px; flex: none; display: flex; align-items: center; padding: 0 72px 0 48px; font-size: 26px; }
.case-name { font-weight: bold; font-size: 28px; }
.close { display: flex; align-items: center; margin-left: 38px; color: #aaa; }
.up { padding-bottom: 2px; }
.ico-close { width: 36px; height: 36px; margin-right: 16px; fill: #a6a6a6; }
.btn { height: 68px; padding-bottom: 2px; border-radius: 34px; color: #fff; font-size: 26px; background: linear-gradient(135deg, #34a5de, #5478cb); box-shadow: 0 4px 10px rgba(0,0,0,.25); }
.start { width: 348px; margin-left: auto; }
.ico-lang { width: 40px; height: 40px; margin-left: 24px; fill: #222; }
.lang { margin-left: 17px; padding-bottom: 2px; color: #222; }
.ico-top { width: 48px; height: 48px; fill: #6e6e6e; }
.user { margin-left: 40px; }
.help { margin-left: 48px; }

/* columns */
.content { flex: 1; display: flex; min-height: 0; }
.zones { width: 600px; flex: none; padding: 56px 48px 0; }
.title { margin: 0; font-size: 36px; line-height: 48px; font-weight: normal; }
.empty { height: 150px; margin-top: 56px; border: 4px solid #e9e9e9; border-radius: 8px; padding: 2px 35px 0; display: flex; align-items: center; color: #888; font-style: italic; }
.add { display: flex; align-items: center; margin: 62px 0 0 8px; height: 40px; font-size: 26px; color: #42a5ff; }
.ico-add { width: 40px; height: 40px; margin-right: 16px; fill: #3fa9ff; }

/* map */
.map { width: 932px; flex: none; position: relative; overflow: hidden; }
.tiles { display: block; width: 932px; height: 1928px; }
.tiles path { stroke-linejoin: round; vector-effect: non-scaling-stroke; }
.all { transform: scale(.5944, .33333); }
.north { transform: scale(.5944, .38265); }
.foot, .bound, .purple, .stream, .river, .rd, .lane, .lane2, .cas, .cas5, .wht, .wht5, .rail, .rail2, .rail6, .raild, .railg, .yard, .yard2, .power, .poles, .cross, .bridge, .d1, .d1c, .blk, .blk4, .or, .orc, .ov { fill: none; }
.w3 { stroke-width: 3px; }
.foot { stroke: #c9ae68; stroke-width: 2px; stroke-dasharray: 9 6; }
.bound { stroke: #c3aabd; stroke-width: 2.5px; stroke-dasharray: 4 6; }
.purple { stroke: #6d68e0; stroke-width: 2.6px; stroke-dasharray: 4 5; }
.stream { stroke: #a5d2e4; stroke-width: 3.6px; }
.river { stroke: #aad3df; stroke-width: 13px; }
.rd { stroke: #fff; stroke-width: 4px; }
.lane { stroke: #d0d0c8; stroke-width: 5px; }
.lane2 { stroke: #f3f3ea; stroke-width: 3px; }
.cas { stroke: #bbb; stroke-width: 11px; }
.wht { stroke: #fff; stroke-width: 8px; }
.cas5 { stroke: #c4c4c4; stroke-width: 8px; }
.wht5 { stroke: #fff; stroke-width: 6px; }
.rail { stroke: #707070; stroke-width: 4px; }
.rail2 { stroke: #777; stroke-width: 3px; }
.rail6 { stroke: #747474; stroke-width: 8px; }
.raild { stroke: #ddd; stroke-width: 2px; stroke-dasharray: 11 9; }
.railg { stroke: #999; stroke-width: 4px; }
.yard { stroke: #686868; stroke-width: 15px; stroke-dasharray: 34 1; }
.yard2 { stroke: #8b8888; stroke-width: 6px; stroke-dasharray: 14 3; }
.power { stroke: #a9a99c; stroke-width: 1.6px; }
.poles { stroke: #777; stroke-width: 5px; }
.cross { stroke: #666; stroke-width: 1.6px; }
.bridge { stroke: #fff; stroke-width: 12px; }
.d1c { stroke: #df6583; stroke-width: 20px; }
.d1 { stroke: #e892a2; stroke-width: 16px; }
.blk { stroke: #161616; stroke-width: 3px; }
.blk4 { stroke: #161616; stroke-width: 3.6px; }
.orc { stroke: #c8965a; stroke-width: 12px; }
.or { stroke: #fcd6a4; stroke-width: 9px; }
.ov { stroke: #222; stroke-width: 2.5px; opacity: .8; }
.tiles .zone { fill: rgba(51,136,255,.22); stroke: #3388ff; stroke-width: 6px; }
.shield rect { stroke: #c9c0b5; }
.lbl { font-family: "Noto Sans", sans-serif; font-size: 20px; paint-order: stroke; stroke: rgba(255,255,255,.6); stroke-width: 3px; text-anchor: middle; }
.ref { fill: #5b554f; stroke: none; }
.peak { fill: #96704c; }
.stn { fill: #4a5cae; font-weight: bold; font-size: 19.5px; letter-spacing: -.3px; }
.place { fill: #858585; font-size: 28px; text-anchor: start; }
.water { fill: #5b93c4; font-size: 23px; text-anchor: start; }
.street { fill: #333; font-size: 17px; text-anchor: start; }
.latlon, .scale, .zoom, .attrib { position: absolute; font-size: 22px; color: #333; }
.latlon { left: 10px; bottom: 64px; width: 280px; height: 38px; line-height: 42px; padding-left: 10px; border-left: 4px solid #777; background: rgba(255,255,255,.5); color: #111; }
.scale { left: 10px; bottom: 10px; width: 160px; height: 34px; line-height: 33px; padding-left: 10px; border: 4px solid #777; border-top: 0; background: rgba(255,255,255,.5); }
.zoom { right: 20px; bottom: 68px; display: flex; flex-direction: column; gap: 16px; }
.fab { width: 80px; height: 80px; border-radius: 50%; background: #e0e0e0; display: flex; align-items: center; justify-content: center; box-shadow: 0 5px 12px rgba(0,0,0,.35); }
.fab svg { width: 40px; height: 40px; fill: #222; }
.attrib { right: 0; bottom: 0; height: 32px; line-height: 34px; padding: 0 10px; background: rgba(255,255,255,.7); white-space: nowrap; }
.attrib a { color: #0078a8; }

/* form */
.form { flex: 1; padding: 56px 48px 0; }
.field { height: 120px; margin: 43px 0 0; padding: 26px 26px 0; border: 2px solid #bababa; border-radius: 3px; color: #222; }
.field legend { margin-left: -10px; padding: 0 10px; font-size: 21px; line-height: 24px; color: #000; }
.subtitle { margin: 74px 0 0; font-size: 32px; line-height: 36px; }
.hint { margin: 22px 0 0; }
.links { display: flex; gap: 50px; margin: 32px 0 0 16px; font-size: 26px; color: #42a5ff; }
.actions { display: flex; justify-content: flex-end; align-items: center; gap: 32px; margin-top: 115px; font-size: 26px; color: #222; }
.save { width: 148px; }
```
